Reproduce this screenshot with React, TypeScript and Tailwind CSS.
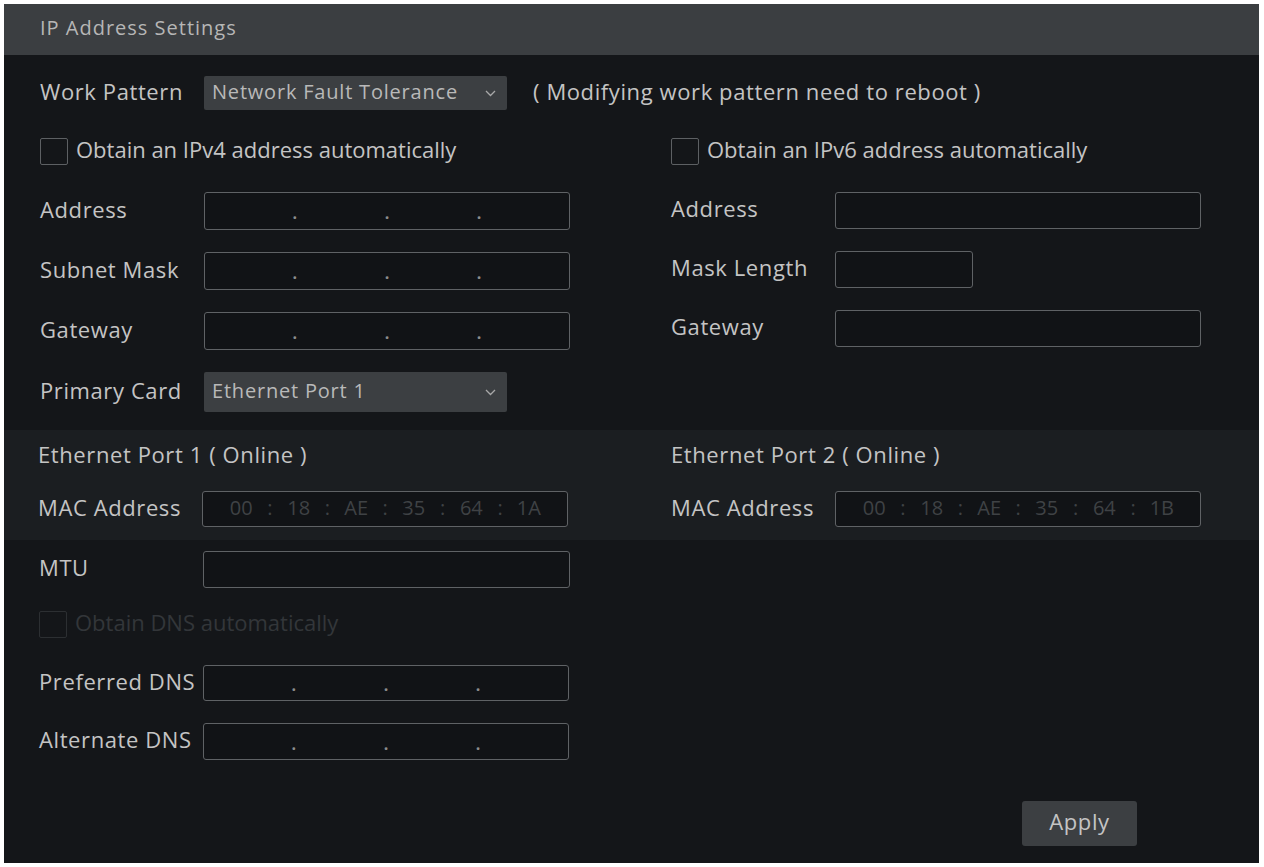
import React from 'react';

const label = 'text-[22px] tracking-[0.6px] text-[#c4c4c4] leading-none whitespace-nowrap pb-[5px]';

function Chevron() {
  return (
    <svg width="11" height="7" viewBox="0 0 11 7" className="shrink-0">
      <polyline points="1,1 5.5,5.5 10,1" fill="none" stroke="#a8a8a8" strokeWidth="1.3" />
    </svg>
  );
}

function Select({ value, width, height }: { value: string; width: string; height: string }) {
  return (
    <div className={`${width} ${height} flex items-center justify-between rounded-[2px] bg-[#3c3f42] pl-[8px] pr-[11px]`}>
      <span className="pb-[3px] text-[20px] leading-none tracking-[0.8px] text-[#b9b9b9]">{value}</span>
      <Chevron />
    </div>
  );
}

function Checkbox({ disabled }: { disabled?: boolean }) {
  return (
    <div
      className={`h-[27px] w-[28px] shrink-0 rounded-[2px] border ${
        disabled ? 'border-[#2c2f32]' : 'border-[#5d6063]'
      }`}
    />
  );
}

function Box({ width, height, children }: { width: string; height: string; children?: React.ReactNode }) {
  return (
    <div className={`${width} ${height} flex items-center rounded-[3px] border border-[#5f6265] bg-[#111316]`}>
      {children}
    </div>
  );
}

function IpBox({ height = 'h-[38px]' }: { height?: string }) {
  return (
    <Box width="w-[366px]" height={height}>
      <div className="flex w-full items-center pt-[4px] text-[16px] font-bold leading-none text-[#8c8c8c]">
        <span className="flex-1" />
        <span>.</span>
        <span className="flex-1" />
        <span>.</span>
        <span className="flex-1" />
        <span>.</span>
        <span className="flex-1" />
      </div>
    </Box>
  );
}

function MacBox({ parts }: { parts: string[] }) {
  return (
    <Box width="w-[366px]" height="h-[36px]">
      <div className="flex w-full items-center px-[12px] pb-[2px] text-[20px] leading-none text-[#3f4245]">
        {parts.map((p, i) => (
          <React.Fragment key={i}>
            {i > 0 && <span>:</span>}
            <span className="flex-1 text-center">{p}</span>
          </React.Fragment>
        ))}
      </div>
    </Box>
  );
}

function Row({ name, children, top }: { name: string; children: React.ReactNode; top?: string }) {
  return (
    <div className={`flex items-center ${top ?? ''}`}>
      <span className={`${label} w-[164px]`}>{name}</span>
      {children}
    </div>
  );
}

export default function App() {
  return (
    <div className="h-[867px] w-[1264px] bg-white pl-[4px] pt-[4px] font-['Open_Sans',sans-serif]">
      <div className="flex h-[859px] w-[1255px] flex-col bg-[#141619]">
        {/* Header */}
        <div className="flex h-[51px] items-center bg-[#3b3e41] pb-[3px] pl-[36px] text-[20px] tracking-[1px] text-[#b6b6b6]">
          IP Address Settings
        </div>

        {/* Work pattern */}
        <div className="mt-[21px] flex h-[34px] items-center pl-[36px]">
          <span className={`${label} w-[164px]`}>Work Pattern</span>
          <Select value="Network Fault Tolerance" width="w-[303px]" height="h-[34px]" />
          <span className={`${label} ml-[26px]`}>( Modifying work pattern need to reboot )</span>
        </div>

        {/* IPv4 / IPv6 */}
        <div className="mt-[28px] grid grid-cols-[631px_1fr] pl-[36px]">
          <div className="flex flex-col">
            <div className="flex h-[27px] items-center gap-[8px]">
              <Checkbox />
              <span className={`${label} tracking-normal`}>Obtain an IPv4 address automatically</span>
            </div>
            <div className="mt-[27px] flex flex-col gap-[22px]">
              <Row name="Address">
                <IpBox />
              </Row>
              <Row name="Subnet Mask">
                <IpBox />
              </Row>
              <Row name="Gateway">
                <IpBox />
              </Row>
              <Row name="Primary Card">
                <Select value="Ethernet Port 1" width="w-[303px]" height="h-[40px]" />
              </Row>
            </div>
          </div>
          <div className="flex flex-col">
            <div className="flex h-[27px] items-center gap-[8px]">
              <Checkbox />
              <span className={`${label} tracking-normal`}>Obtain an IPv6 address automatically</span>
            </div>
            <div className="mt-[27px] flex flex-col gap-[22px]">
              <Row name="Address">
                <Box width="w-[366px]" height="h-[37px]" />
              </Row>
              <Row name="Mask Length">
                <Box width="w-[138px]" height="h-[37px]" />
              </Row>
              <Row name="Gateway">
                <Box width="w-[366px]" height="h-[37px]" />
              </Row>
            </div>
          </div>
        </div>

        {/* Ethernet ports */}
        <div className="mt-[18px] grid grid-cols-[631px_1fr] bg-[#1b1e21] pb-[13px] pl-[34px] pt-[13px]">
          <div className="flex flex-col">
            <div className={`${label} flex h-[26px] items-center`}>Ethernet Port 1 ( Online )</div>
            <Row name="MAC Address" top="mt-[22px]">
              <MacBox parts={['00', '18', 'AE', '35', '64', '1A']} />
            </Row>
          </div>
          <div className="flex flex-col pl-[2px]">
            <div className={`${label} flex h-[26px] items-center`}>Ethernet Port 2 ( Online )</div>
            <Row name="MAC Address" top="mt-[22px]">
              <MacBox parts={['00', '18', 'AE', '35', '64', '1B']} />
            </Row>
          </div>
        </div>

        {/* MTU / DNS */}
        <div className="flex flex-col pl-[35px]">
          <Row name="MTU" top="mt-[11px]">
            <Box width="w-[367px]" height="h-[37px]" />
          </Row>
          <div className="mt-[22px] flex h-[28px] items-center gap-[8px]">
            <Checkbox disabled />
            <span className="pb-[5px] text-[22px] leading-none text-[#33363a]">Obtain DNS automatically</span>
          </div>
          <div className="mt-[27px] flex flex-col gap-[22px]">
            <Row name="Preferred DNS">
              <IpBox height="h-[36px]" />
            </Row>
            <Row name="Alternate DNS">
              <IpBox height="h-[37px]" />
            </Row>
          </div>
        </div>

        {/* Apply */}
        <div className="mr-[122px] mt-[41px] flex justify-end">
          <button className="h-[45px] w-[115px] rounded-[3px] bg-[#3c3f42] pb-[4px] text-[22px] tracking-[0.6px] text-[#c4c4c4]">
            Apply
          </button>
        </div>
      </div>
    </div>
  );
}
